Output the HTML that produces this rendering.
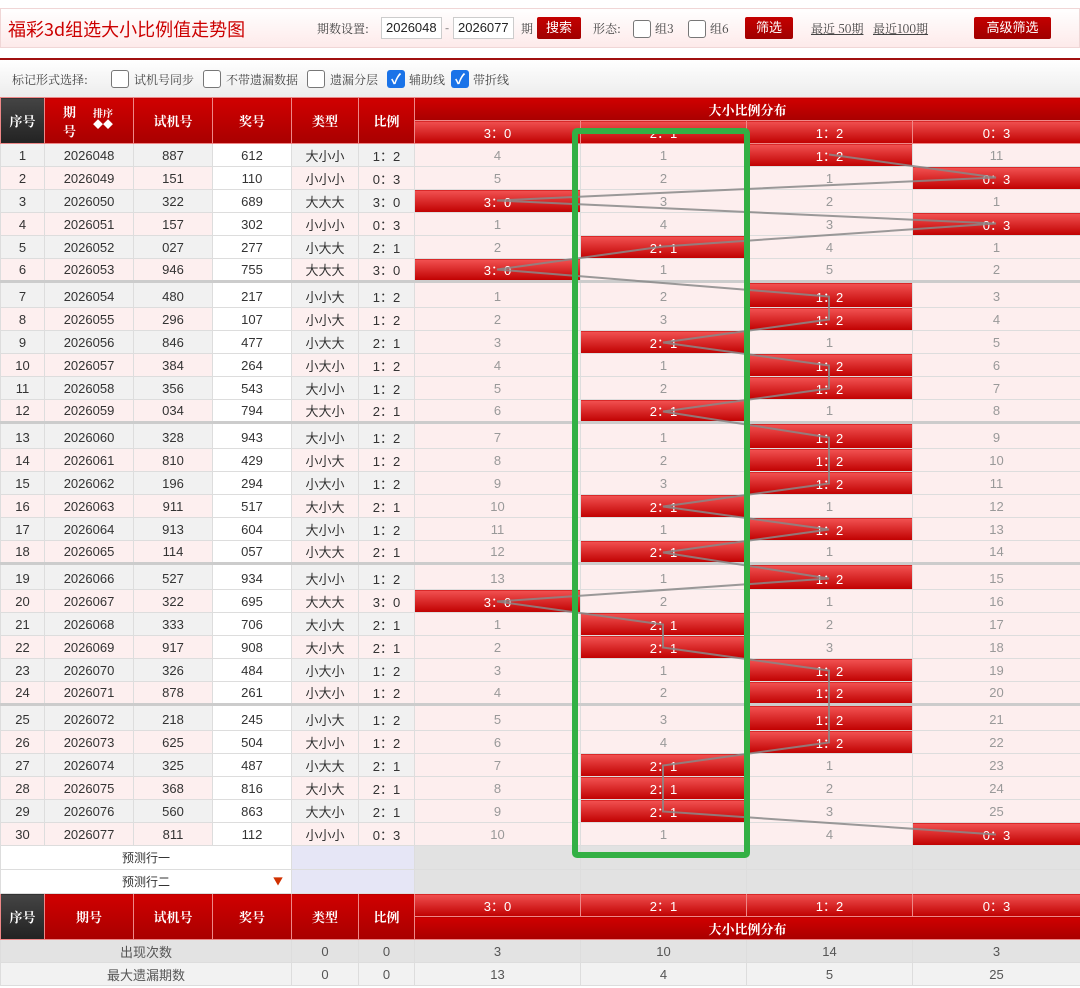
<!DOCTYPE html>
<html><head><meta charset="utf-8">
<style>
*{margin:0;padding:0;box-sizing:border-box}
body{width:1080px;height:988px;background:#fff;font-family:"Liberation Sans","Noto Sans CJK SC",sans-serif;position:relative;overflow:hidden;color:#333}
.a{position:absolute}
.top{left:0;top:8px;width:1080px;height:40px;background:linear-gradient(#fff,#fdeaea);border:1px solid #f0d6d6}
.title{left:8px;top:16px;font-size:18px;color:#c00;font-family:"Noto Sans CJK SC",sans-serif}
.lbl{font-size:12px;color:#444;font-family:"Noto Serif CJK SC",serif}
.inp{height:22px;border:1px solid #ccc;background:#fff;font-size:13px;line-height:20px;padding-left:4px;color:#222}
.btn{height:22px;background:linear-gradient(#c40000,#a00000);color:#fff;font-size:13px;line-height:22px;text-align:center;border-radius:2px}
.cb{width:18px;height:18px;border:1px solid #777;border-radius:3px;background:#fff}
.cbc{width:18px;height:18px;border-radius:3px;background:#1a73e8;color:#fff;font-size:14px;line-height:18px;text-align:center;font-weight:bold}
.bar2{left:0;top:58px;width:1080px;height:39px;border-top:2px solid #a01010;background:linear-gradient(#fff,#ececec)}
table{position:absolute;left:0;top:97px;border-collapse:collapse;table-layout:fixed;width:1080px}
td{border:1px solid #ddd;height:23px;text-align:center;font-size:13px;padding:0;white-space:nowrap;overflow:hidden}
.h td{background:linear-gradient(#d00000,#a80000);color:#fff;font-weight:bold;font-family:"Noto Serif CJK SC",serif;border-color:#e88}
.h td.dk{background:linear-gradient(#444,#222)}
.h td.lt{background:linear-gradient(#f05050,#c00000);font-weight:normal;font-family:"Liberation Sans",sans-serif}
tr.o td{background:#f1f1f1}
tr.e td{background:#fdefef}
tr.o td.w,tr.e td.w{background:#fff}
td.d{background:#fdeeee !important;color:#999}
td.hit{background:linear-gradient(#f25252,#c00000) !important;color:#fff}
tr.g td{border-top:3px solid #ccc;height:26px;padding-top:2px}
td.t{font-family:"Noto Sans CJK SC",sans-serif}
.pr td{background:#fff;height:24px}
.pr td.lv{background:#e6e6f6}
.pr td.gy{background:#e2e2e2}
.s1 td{background:#e3e3e3;color:#555}
.s2 td{background:#f2f2f2;color:#555}
</style></head><body>
<div class="a top"></div>
<div class="a title">福彩3d组选大小比例值走势图</div>
<div class="a lbl" style="left:317px;top:20px">期数设置:</div>
<div class="a inp" style="left:381px;top:17px;width:61px">2026048</div>
<div class="a lbl" style="left:445px;top:19px">-</div>
<div class="a inp" style="left:453px;top:17px;width:61px">2026077</div>
<div class="a lbl" style="left:521px;top:20px">期</div>
<div class="a btn" style="left:537px;top:17px;width:44px">搜索</div>
<div class="a lbl" style="left:593px;top:20px">形态:</div>
<div class="a cb" style="left:633px;top:20px"></div>
<div class="a lbl" style="left:655px;top:20px">组3</div>
<div class="a cb" style="left:688px;top:20px"></div>
<div class="a lbl" style="left:710px;top:20px">组6</div>
<div class="a btn" style="left:745px;top:17px;width:48px">筛选</div>
<div class="a lbl" style="left:811px;top:20px;text-decoration:underline">最近 50期</div>
<div class="a lbl" style="left:873px;top:20px;text-decoration:underline">最近100期</div>
<div class="a btn" style="left:974px;top:17px;width:77px">高级筛选</div>
<div class="a bar2"></div>
<div class="a lbl" style="left:12px;top:71px">标记形式选择:</div>
<div class="a cb" style="left:111px;top:70px"></div><div class="a lbl" style="left:134px;top:71px">试机号同步</div>
<div class="a cb" style="left:203px;top:70px"></div><div class="a lbl" style="left:226px;top:71px">不带遗漏数据</div>
<div class="a cb" style="left:307px;top:70px"></div><div class="a lbl" style="left:330px;top:71px">遗漏分层</div>
<div class="a cbc" style="left:387px;top:70px">✓</div><div class="a lbl" style="left:409px;top:71px">辅助线</div>
<div class="a cbc" style="left:451px;top:70px">✓</div><div class="a lbl" style="left:473px;top:71px">带折线</div>

<table>
<colgroup><col style="width:44px"><col style="width:89px"><col style="width:79px"><col style="width:79px"><col style="width:67px"><col style="width:56px"><col style="width:166px"><col style="width:166px"><col style="width:166px"><col style="width:168px"></colgroup>
<tr class="h"><td class="dk" rowspan="2">序号</td><td rowspan="2" style="position:relative"><span style="position:absolute;left:18px;top:4px;line-height:19px">期<br>号</span><span style="position:absolute;left:48px;top:9px;font-size:10px;line-height:11px">排序<br>◆◆</span></td><td rowspan="2">试机号</td><td rowspan="2">奖号</td><td rowspan="2">类型</td><td rowspan="2">比例</td><td colspan="4">大小比例分布</td></tr>
<tr class="h"><td class="lt">3：0</td><td class="lt">2：1</td><td class="lt">1：2</td><td class="lt">0：3</td></tr>
<tr class="o"><td>1</td><td>2026048</td><td>887</td><td class="w">612</td><td class="t">大小小</td><td>1：2</td><td class="d">4</td><td class="d">1</td><td class="d hit">1：2</td><td class="d">11</td></tr>
<tr class="e"><td>2</td><td>2026049</td><td>151</td><td class="w">110</td><td class="t">小小小</td><td>0：3</td><td class="d">5</td><td class="d">2</td><td class="d">1</td><td class="d hit">0：3</td></tr>
<tr class="o"><td>3</td><td>2026050</td><td>322</td><td class="w">689</td><td class="t">大大大</td><td>3：0</td><td class="d hit">3：0</td><td class="d">3</td><td class="d">2</td><td class="d">1</td></tr>
<tr class="e"><td>4</td><td>2026051</td><td>157</td><td class="w">302</td><td class="t">小小小</td><td>0：3</td><td class="d">1</td><td class="d">4</td><td class="d">3</td><td class="d hit">0：3</td></tr>
<tr class="o"><td>5</td><td>2026052</td><td>027</td><td class="w">277</td><td class="t">小大大</td><td>2：1</td><td class="d">2</td><td class="d hit">2：1</td><td class="d">4</td><td class="d">1</td></tr>
<tr class="e"><td>6</td><td>2026053</td><td>946</td><td class="w">755</td><td class="t">大大大</td><td>3：0</td><td class="d hit">3：0</td><td class="d">1</td><td class="d">5</td><td class="d">2</td></tr>
<tr class="o g"><td>7</td><td>2026054</td><td>480</td><td class="w">217</td><td class="t">小小大</td><td>1：2</td><td class="d">1</td><td class="d">2</td><td class="d hit">1：2</td><td class="d">3</td></tr>
<tr class="e"><td>8</td><td>2026055</td><td>296</td><td class="w">107</td><td class="t">小小大</td><td>1：2</td><td class="d">2</td><td class="d">3</td><td class="d hit">1：2</td><td class="d">4</td></tr>
<tr class="o"><td>9</td><td>2026056</td><td>846</td><td class="w">477</td><td class="t">小大大</td><td>2：1</td><td class="d">3</td><td class="d hit">2：1</td><td class="d">1</td><td class="d">5</td></tr>
<tr class="e"><td>10</td><td>2026057</td><td>384</td><td class="w">264</td><td class="t">小大小</td><td>1：2</td><td class="d">4</td><td class="d">1</td><td class="d hit">1：2</td><td class="d">6</td></tr>
<tr class="o"><td>11</td><td>2026058</td><td>356</td><td class="w">543</td><td class="t">大小小</td><td>1：2</td><td class="d">5</td><td class="d">2</td><td class="d hit">1：2</td><td class="d">7</td></tr>
<tr class="e"><td>12</td><td>2026059</td><td>034</td><td class="w">794</td><td class="t">大大小</td><td>2：1</td><td class="d">6</td><td class="d hit">2：1</td><td class="d">1</td><td class="d">8</td></tr>
<tr class="o g"><td>13</td><td>2026060</td><td>328</td><td class="w">943</td><td class="t">大小小</td><td>1：2</td><td class="d">7</td><td class="d">1</td><td class="d hit">1：2</td><td class="d">9</td></tr>
<tr class="e"><td>14</td><td>2026061</td><td>810</td><td class="w">429</td><td class="t">小小大</td><td>1：2</td><td class="d">8</td><td class="d">2</td><td class="d hit">1：2</td><td class="d">10</td></tr>
<tr class="o"><td>15</td><td>2026062</td><td>196</td><td class="w">294</td><td class="t">小大小</td><td>1：2</td><td class="d">9</td><td class="d">3</td><td class="d hit">1：2</td><td class="d">11</td></tr>
<tr class="e"><td>16</td><td>2026063</td><td>911</td><td class="w">517</td><td class="t">大小大</td><td>2：1</td><td class="d">10</td><td class="d hit">2：1</td><td class="d">1</td><td class="d">12</td></tr>
<tr class="o"><td>17</td><td>2026064</td><td>913</td><td class="w">604</td><td class="t">大小小</td><td>1：2</td><td class="d">11</td><td class="d">1</td><td class="d hit">1：2</td><td class="d">13</td></tr>
<tr class="e"><td>18</td><td>2026065</td><td>114</td><td class="w">057</td><td class="t">小大大</td><td>2：1</td><td class="d">12</td><td class="d hit">2：1</td><td class="d">1</td><td class="d">14</td></tr>
<tr class="o g"><td>19</td><td>2026066</td><td>527</td><td class="w">934</td><td class="t">大小小</td><td>1：2</td><td class="d">13</td><td class="d">1</td><td class="d hit">1：2</td><td class="d">15</td></tr>
<tr class="e"><td>20</td><td>2026067</td><td>322</td><td class="w">695</td><td class="t">大大大</td><td>3：0</td><td class="d hit">3：0</td><td class="d">2</td><td class="d">1</td><td class="d">16</td></tr>
<tr class="o"><td>21</td><td>2026068</td><td>333</td><td class="w">706</td><td class="t">大小大</td><td>2：1</td><td class="d">1</td><td class="d hit">2：1</td><td class="d">2</td><td class="d">17</td></tr>
<tr class="e"><td>22</td><td>2026069</td><td>917</td><td class="w">908</td><td class="t">大小大</td><td>2：1</td><td class="d">2</td><td class="d hit">2：1</td><td class="d">3</td><td class="d">18</td></tr>
<tr class="o"><td>23</td><td>2026070</td><td>326</td><td class="w">484</td><td class="t">小大小</td><td>1：2</td><td class="d">3</td><td class="d">1</td><td class="d hit">1：2</td><td class="d">19</td></tr>
<tr class="e"><td>24</td><td>2026071</td><td>878</td><td class="w">261</td><td class="t">小大小</td><td>1：2</td><td class="d">4</td><td class="d">2</td><td class="d hit">1：2</td><td class="d">20</td></tr>
<tr class="o g"><td>25</td><td>2026072</td><td>218</td><td class="w">245</td><td class="t">小小大</td><td>1：2</td><td class="d">5</td><td class="d">3</td><td class="d hit">1：2</td><td class="d">21</td></tr>
<tr class="e"><td>26</td><td>2026073</td><td>625</td><td class="w">504</td><td class="t">大小小</td><td>1：2</td><td class="d">6</td><td class="d">4</td><td class="d hit">1：2</td><td class="d">22</td></tr>
<tr class="o"><td>27</td><td>2026074</td><td>325</td><td class="w">487</td><td class="t">小大大</td><td>2：1</td><td class="d">7</td><td class="d hit">2：1</td><td class="d">1</td><td class="d">23</td></tr>
<tr class="e"><td>28</td><td>2026075</td><td>368</td><td class="w">816</td><td class="t">大小大</td><td>2：1</td><td class="d">8</td><td class="d hit">2：1</td><td class="d">2</td><td class="d">24</td></tr>
<tr class="o"><td>29</td><td>2026076</td><td>560</td><td class="w">863</td><td class="t">大大小</td><td>2：1</td><td class="d">9</td><td class="d hit">2：1</td><td class="d">3</td><td class="d">25</td></tr>
<tr class="e"><td>30</td><td>2026077</td><td>811</td><td class="w">112</td><td class="t">小小小</td><td>0：3</td><td class="d">10</td><td class="d">1</td><td class="d">4</td><td class="d hit">0：3</td></tr>
<tr class="pr"><td colspan="4" class="t" style="font-size:12px">预测行一</td><td colspan="2" class="lv"></td><td class="gy"></td><td class="gy"></td><td class="gy"></td><td class="gy"></td></tr>
<tr class="pr"><td colspan="4" class="t" style="font-size:12px;position:relative">预测行二<span style="position:absolute;right:8px;color:#d03000;font-size:10px">▼</span></td><td colspan="2" class="lv"></td><td class="gy"></td><td class="gy"></td><td class="gy"></td><td class="gy"></td></tr>
<tr class="h"><td class="dk" rowspan="2">序号</td><td rowspan="2">期号</td><td rowspan="2">试机号</td><td rowspan="2">奖号</td><td rowspan="2">类型</td><td rowspan="2">比例</td><td class="lt">3：0</td><td class="lt">2：1</td><td class="lt">1：2</td><td class="lt">0：3</td></tr>
<tr class="h"><td colspan="4">大小比例分布</td></tr>
<tr class="s1"><td colspan="4" class="t">出现次数</td><td>0</td><td>0</td><td>3</td><td>10</td><td>14</td><td>3</td></tr>
<tr class="s2"><td colspan="4" class="t">最大遗漏期数</td><td>0</td><td>0</td><td>13</td><td>4</td><td>5</td><td>25</td></tr>
</table>

<svg class="a" style="left:0;top:0" width="1080" height="988">
<polyline fill="none" stroke="#888" stroke-width="2" stroke-opacity="0.85" points="829,154.5 996,177.5 497,200.5 996,223.5 663,246.5 497,269.5 829,296.5 829,319.5 663,342.5 829,365.5 829,388.5 663,411.5 829,437.5 829,460.5 829,483.5 663,506.5 829,529.5 663,552.5 829,578.5 497,601.5 663,624.5 663,647.5 829,670.5 829,693.5 829,719.5 829,742.5 663,765.5 663,788.5 663,811.5 996,834.5"/>
<rect x="575" y="131" width="172" height="724" fill="none" stroke="#33b044" stroke-width="6" rx="2"/>
</svg>
</body></html>
